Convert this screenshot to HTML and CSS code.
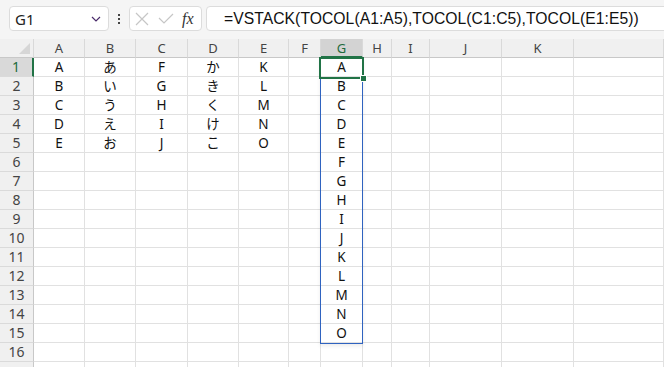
FILE: index.html
```html
<!DOCTYPE html>
<html lang="ja">
    <head>
        <meta charset="UTF-8">
        <title>VSTACK</title>
        <link rel="stylesheet" href="styles.css">
    </head>
    <body>
        <div class="toolbar">
            <div class="name-box">
                <span class="name-text">G1</span>
                <svg class="chevron" width="10" height="6" viewBox="0 0 10 6"><path d="M1 1 L5 5 L9 1" fill="none" stroke="#4b2c6b" stroke-width="1.2"/></svg>
            </div>
            <div class="dots"><i></i><i></i><i></i></div>
            <div class="fx-box">
                <svg width="14" height="14" viewBox="0 0 14 14"><path d="M1 1 L13 13 M13 1 L1 13" stroke="#c6c6c6" stroke-width="1.2"/></svg>
                <svg width="16" height="12" viewBox="0 0 16 12"><path d="M1 5 L6 10 L15 1" fill="none" stroke="#c6c6c6" stroke-width="1.2"/></svg>
                <span class="fx">fx</span>
            </div>
            <div class="formula">=VSTACK(TOCOL(A1:A5),TOCOL(C1:C5),TOCOL(E1:E5))</div>
        </div>
        <div class="sheet">
            <div class="row head">
                <span class="corner"><i></i></span><span>A</span><span>B</span><span>C</span><span>D</span><span>E</span><span>F</span><span class="sel-col">G</span><span>H</span><span>I</span><span>J</span><span>K</span><span></span>
            </div>
            <div class="row"><span class="num sel-row">1</span><span>A</span><span>あ</span><span>F</span><span>か</span><span>K</span><span></span><span>A</span><span></span><span></span><span></span><span></span><span></span></div>
            <div class="row"><span class="num">2</span><span>B</span><span>い</span><span>G</span><span>き</span><span>L</span><span></span><span>B</span><span></span><span></span><span></span><span></span><span></span></div>
            <div class="row"><span class="num">3</span><span>C</span><span>う</span><span>H</span><span>く</span><span>M</span><span></span><span>C</span><span></span><span></span><span></span><span></span><span></span></div>
            <div class="row"><span class="num">4</span><span>D</span><span>え</span><span>I</span><span>け</span><span>N</span><span></span><span>D</span><span></span><span></span><span></span><span></span><span></span></div>
            <div class="row"><span class="num">5</span><span>E</span><span>お</span><span>J</span><span>こ</span><span>O</span><span></span><span>E</span><span></span><span></span><span></span><span></span><span></span></div>
            <div class="row"><span class="num">6</span><span></span><span></span><span></span><span></span><span></span><span></span><span>F</span><span></span><span></span><span></span><span></span><span></span></div>
            <div class="row"><span class="num">7</span><span></span><span></span><span></span><span></span><span></span><span></span><span>G</span><span></span><span></span><span></span><span></span><span></span></div>
            <div class="row"><span class="num">8</span><span></span><span></span><span></span><span></span><span></span><span></span><span>H</span><span></span><span></span><span></span><span></span><span></span></div>
            <div class="row"><span class="num">9</span><span></span><span></span><span></span><span></span><span></span><span></span><span>I</span><span></span><span></span><span></span><span></span><span></span></div>
            <div class="row"><span class="num">10</span><span></span><span></span><span></span><span></span><span></span><span></span><span>J</span><span></span><span></span><span></span><span></span><span></span></div>
            <div class="row"><span class="num">11</span><span></span><span></span><span></span><span></span><span></span><span></span><span>K</span><span></span><span></span><span></span><span></span><span></span></div>
            <div class="row"><span class="num">12</span><span></span><span></span><span></span><span></span><span></span><span></span><span>L</span><span></span><span></span><span></span><span></span><span></span></div>
            <div class="row"><span class="num">13</span><span></span><span></span><span></span><span></span><span></span><span></span><span>M</span><span></span><span></span><span></span><span></span><span></span></div>
            <div class="row"><span class="num">14</span><span></span><span></span><span></span><span></span><span></span><span></span><span>N</span><span></span><span></span><span></span><span></span><span></span></div>
            <div class="row"><span class="num">15</span><span></span><span></span><span></span><span></span><span></span><span></span><span>O</span><span></span><span></span><span></span><span></span><span></span></div>
            <div class="row"><span class="num">16</span><span></span><span></span><span></span><span></span><span></span><span></span><span></span><span></span><span></span><span></span><span></span><span></span></div>
            <div class="row"><span class="num"></span><span></span><span></span><span></span><span></span><span></span><span></span><span></span><span></span><span></span><span></span><span></span><span></span></div>
            <div class="range"></div>
            <div class="active"><i></i></div>
        </div>
    </body>
</html>
```

FILE: styles.css
```css
*
{
    margin: 0;
    padding: 0;
    box-sizing: border-box;
}

body
{
    height: 367px;
    overflow: hidden;
    background: #ffffff;
    font-family: "Noto Sans", "Noto Sans CJK JP", sans-serif;
}

.toolbar
{
    display: flex;
    align-items: center;
    height: 39px;
    padding: 0 0 2px 9px;
    background: #f5f5f5;
}

.name-box
{
    display: flex;
    align-items: center;
    justify-content: space-between;
    width: 100px;
    height: 25px;
    padding: 0 7px 0 5px;
    background: #ffffff;
    border: 1px solid #dcdcdc;
    border-radius: 4px;
}

.name-text
{
    font-size: 15px;
    color: #222222;
}

.dots
{
    display: flex;
    flex-direction: column;
    gap: 2px;
    margin: 0 9px 0 9px;
}

.dots i
{
    display: block;
    width: 2px;
    height: 2px;
    background: #444444;
}

.fx-box
{
    display: flex;
    align-items: center;
    gap: 9px;
    width: 73px;
    height: 25px;
    padding: 0 0 0 5px;
    background: #ffffff;
    border: 1px solid #dcdcdc;
    border-radius: 4px;
}

.fx
{
    font-family: "Liberation Serif", serif;
    font-style: italic;
    font-size: 16px;
    color: #333333;
    margin-left: -1px;
}

.formula
{
    flex: 1;
    height: 25px;
    margin-left: 4px;
    margin-right: -6px;
    padding-left: 17px;
    line-height: 23px;
    font-family: "Liberation Sans", sans-serif;
    font-size: 15.7px;
    letter-spacing: 0.05px;
    color: #111111;
    background: #ffffff;
    border: 1px solid #dcdcdc;
    border-radius: 4px;
}

.sheet
{
    position: relative;
}

.row
{
    display: grid;
    grid-template-columns: 34px 51px 51px 52px 51px 50px 32px 42px 29px 38px 72px 72px 1fr;
    height: 19px;
}

.row span
{
    display: block;
    height: 19px;
    line-height: 18px;
    text-align: center;
    font-size: 13.5px;
    color: #111111;
    border-right: 1px solid #e1e1e1;
    border-bottom: 1px solid #e1e1e1;
    overflow: hidden;
}

.row.head span
{
    font-size: 13px;
    color: #444444;
    background: #f0f0f0;
    border-right-color: #d9d9d9;
    border-bottom-color: #c8c8c8;
}

.row.head .sel-col
{
    color: #1e6b3d;
    background: #d3d3d3;
    border-bottom: 2px solid #217346;
}

.corner
{
    position: relative;
}

.corner i
{
    position: absolute;
    right: 3px;
    bottom: 3px;
    width: 0;
    height: 0;
    border-left: 11px solid transparent;
    border-bottom: 11px solid #d6d6d6;
}

.row .num
{
    font-size: 14px;
    color: #444444;
    background: #f0f0f0;
    border-right-color: #c8c8c8;
    border-bottom-color: #dadada;
}

.row .sel-row
{
    color: #1e6b3d;
    background: #d9d9d9;
    border-right: 2px solid #217346;
}

.range
{
    position: absolute;
    left: 320px;
    top: 19px;
    width: 43px;
    height: 286px;
    border: 1px solid #2f63c0;
    box-shadow: 0 2px 4px rgba( 0, 0, 0, 0.08 );
}

.active
{
    position: absolute;
    left: 319px;
    top: 18px;
    width: 45px;
    height: 22px;
    border: 2px solid #217346;
}

.active i
{
    position: absolute;
    right: -5px;
    bottom: -5px;
    width: 7px;
    height: 7px;
    background: #217346;
    border: 1px solid #ffffff;
}
```
